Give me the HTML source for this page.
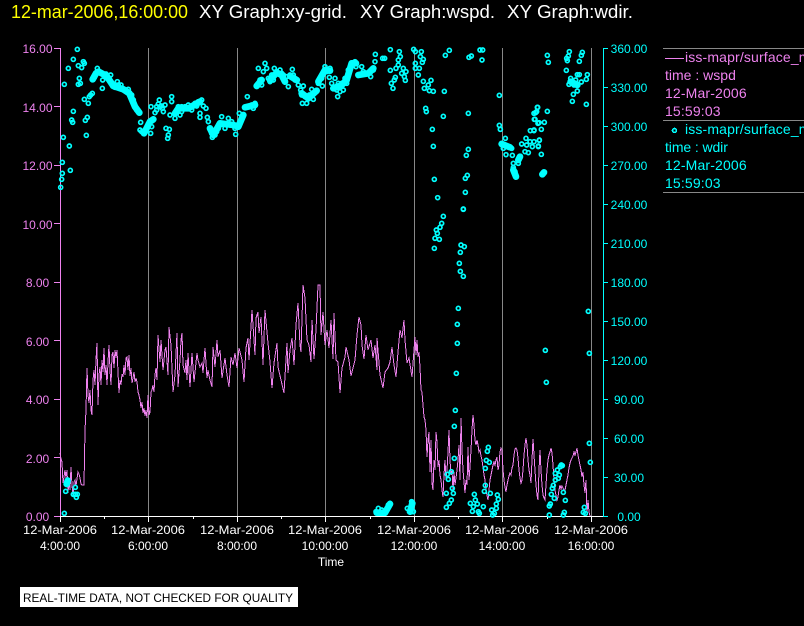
<!DOCTYPE html>
<html><head><meta charset="utf-8"><style>
html,body{margin:0;padding:0;background:#000;width:804px;height:626px;overflow:hidden}
svg{display:block}
text{font-family:"Liberation Sans",sans-serif}
.d{fill:none;stroke:none;marker-start:url(#m);marker-mid:url(#m);marker-end:url(#m)}
.b{fill:none;stroke:#0ff;stroke-width:20;stroke-linejoin:round;stroke-linecap:round}
.l{font-size:12px;fill:#ee82ee;text-anchor:middle}
.r{font-size:12px;fill:#0ff;text-anchor:middle}
.x{font-size:12px;fill:#fff;text-anchor:middle}
.g{font-size:14px;letter-spacing:.15px}
.c{shape-rendering:crispEdges}
</style></head><body>
<svg width="804" height="626" viewBox="0 0 804 626" xmlns="http://www.w3.org/2000/svg">
<defs><marker id="m" markerUnits="userSpaceOnUse" markerWidth="30" markerHeight="30" refX="15" refY="15" overflow="visible"><circle cx="15" cy="15" r="6" fill="none" stroke="#0ff" stroke-width="5"/></marker></defs>
<rect width="804" height="626" fill="#000"/>
<text x="11" y="18" font-size="18" fill="#ff0" textLength="177" lengthAdjust="spacingAndGlyphs">12-mar-2006,16:00:00</text>
<text x="199" y="18" font-size="18" fill="#fff" textLength="148" lengthAdjust="spacingAndGlyphs">XY Graph:xy-grid.</text>
<text x="360" y="18" font-size="18" fill="#fff" textLength="135" lengthAdjust="spacingAndGlyphs">XY Graph:wspd.</text>
<text x="507" y="18" font-size="18" fill="#fff" textLength="126" lengthAdjust="spacingAndGlyphs">XY Graph:wdir.</text>

<path class="c" d="M148.500 48V516M237.500 48V516M325.500 48V516M414.500 48V516M502.500 48V516M591.500 48V516" stroke="#888" stroke-width="1" fill="none"/>

<polyline fill="none" stroke="#ee82ee" stroke-width="1" class="c" points="60,453 61,459 62,462 63,483 64,477 65,470 66,478 67,470 68,493 69,480 70,490 71,467 72,485 73,497 74,482 75,480 76,486 77,479 78,472 79,474 80,478 81,484 82,485 84,485 85,430 86,410 87,368 88,395 89,403 90,390 91,410 92,415 93,380 94,370 95,385 96,360 97,343 98,405 99,375 100,367 101,385 102,360 103,372 104,348 105,375 106,365 107,385 108,362 109,345 110,370 111,385 112,355 113,352 114,368 115,350 116,358 117,350 118,372 119,393 120,380 121,385 122,374 123,377 124,365 125,375 126,358 127,357 128,370 129,355 130,376 131,368 132,383 133,378 134,372 135,382 136,378 137,382 138,392 139,395 140,400 141,408 142,402 143,413 144,408 145,416 146,410 147,418 148,395 149,415 150,412 151,392 152,390 153,385 154,392 155,375 156,368 157,380 158,335 160,362 161,340 163,370 165,350 166,347 168,375 169,327 171,345 173,392 175,375 177,333 178,387 180,360 181,340 182,333 183,365 185,373 186,360 187,380 188,353 190,387 192,353 194,382 197,353 198,360 200,367 202,363 203,373 205,348 207,378 208,370 210,380 212,387 213,347 215,367 217,340 218,357 220,350 222,378 225,358 227,375 229,387 231,357 233,365 235,353 237,368 239,348 242,360 244,382 246,348 248,338 249,360 251,327 252,310 253,325 255,355 256,318 258,312 259,333 261,317 263,365 265,310 268,343 270,362 272,388 274,363 277,343 278,367 281,380 284,393 287,343 288,373 290,350 292,338 294,365 296,325 298,303 300,345 301,352 303,285 305,298 307,340 309,345 311,362 312,320 314,359 316,330 318,285 320,285 321,335 323,312 325,345 327,330 329,348 331,320 333,359 334,313 336,360 338,362 340,393 342,368 345,357 346,347 349,360 351,376 353,368 355,360 357,335 359,317 361,325 362,345 364,359 366,335 368,350 371,340 373,358 375,345 377,370 377,338 380,375 383,388 385,372 388,368 390,362 392,347 394,365 396,377 398,352 400,330 402,338 404,320 405,340 407,363 409,358 412,377 414,350 415,337 416,355 417,340 418,357 419,352 420,367 421,390 422,392 423,405 424,417 425,420 426,430 427,457 428,440 429,432 430,472 431,440 432,483 433,490 434,460 435,470 436,432 437,442 438,467 439,460 440,475 441,480 442,490 443,497 444,475 445,460 446,480 447,470 448,452 449,430 450,460 451,475 452,470 453,490 454,472 455,485 456,478 457,470 458,460 459,445 460,480 461,418 462,450 463,470 464,482 465,493 466,480 467,485 468,447 469,480 470,467 471,450 472,430 473,415 474,425 475,440 476,445 477,440 478,445 479,452 480,450 481,456 482,460 483,467 484,475 485,480 486,490 487,495 488,500 489,490 490,480 491,475 492,470 493,465 494,462 495,465 496,460 497,457 498,470 499,465 500,452 501,448 502,450 503,470 504,480 505,487 506,492 507,485 508,480 509,476 510,473 511,475 512,468 513,465 514,455 515,449 516,448 517,450 518,458 519,470 520,478 521,483 522,480 523,470 524,455 525,445 526,438 527,445 528,460 529,470 530,475 531,483 532,460 533,439 534,455 535,470 536,485 537,495 538,500 539,470 540,450 541,470 542,485 543,495 544,498 545,500 546,485 547,470 548,460 549,455 550,452 551,448 552,453 553,465 554,480 555,490 556,495 557,500 558,497 559,490 560,485 561,489 562,486 563,488 564,490 565,490 566,485 567,480 568,475 569,468 570,463 571,460 572,458 573,456 574,452 575,455 576,452 577,448 578,455 579,460 580,465 581,470 582,477 583,472 584,485 585,493 586,480 587,513 588,500 589,512 590,516"/>

<!-- left axis -->
<path class="c" d="M60.500 48V516M54 48.500H60M54 106.500H60M54 165.500H60M54 223.500H60M54 282.500H60M54 340.500H60M54 399.500H60M54 457.500H60M54 516.500H60" stroke="#ee82ee" fill="none"/>
<!-- right axis -->
<path class="c" d="M603.500 48V516M603 48.500H608M603 87.500H608M603 126.500H608M603 165.500H608M603 204.500H608M603 243.500H608M603 282.500H608M603 321.500H608M603 360.500H608M603 399.500H608M603 438.500H608M603 477.500H608M603 516.500H608" stroke="#0ff" fill="none"/>
<!-- x axis -->
<path class="c" d="M60 516.500H603M60.500 516V522M148.500 516V522M237.500 516V522M325.500 516V522M414.500 516V522M502.500 516V522M591.500 516V522M104.500 516V519M193.500 516V519M281.500 516V519M370.500 516V519M458.500 516V519M547.500 516V519" stroke="#fff" fill="none"/>

<text class="l" x="37.500" y="53">16.00</text><text class="l" x="37.500" y="112">14.00</text><text class="l" x="37.500" y="170">12.00</text><text class="l" x="37.500" y="229">10.00</text><text class="l" x="37.500" y="287">8.00</text><text class="l" x="37.500" y="346">6.00</text><text class="l" x="37.500" y="404">4.00</text><text class="l" x="37.500" y="463">2.00</text><text class="l" x="37.500" y="521">0.00</text>

<text class="r" x="629" y="53">360.00</text><text class="r" x="629" y="92">330.00</text><text class="r" x="629" y="131">300.00</text><text class="r" x="629" y="170">270.00</text><text class="r" x="629" y="209">240.00</text><text class="r" x="629" y="248">210.00</text><text class="r" x="629" y="287">180.00</text><text class="r" x="629" y="326">150.00</text><text class="r" x="629" y="365">120.00</text><text class="r" x="629" y="404">90.00</text><text class="r" x="629" y="443">60.00</text><text class="r" x="629" y="482">30.00</text><text class="r" x="629" y="521">0.00</text>

<text class="x" x="60" y="534" textLength="74" lengthAdjust="spacingAndGlyphs">12-Mar-2006</text><text class="x" x="60" y="550">4:00:00</text>
<text class="x" x="148" y="534" textLength="74" lengthAdjust="spacingAndGlyphs">12-Mar-2006</text><text class="x" x="148" y="550">6:00:00</text>
<text class="x" x="237" y="534" textLength="74" lengthAdjust="spacingAndGlyphs">12-Mar-2006</text><text class="x" x="237" y="550">8:00:00</text>
<text class="x" x="325" y="534" textLength="74" lengthAdjust="spacingAndGlyphs">12-Mar-2006</text><text class="x" x="325" y="550">10:00:00</text>
<text class="x" x="414" y="534" textLength="74" lengthAdjust="spacingAndGlyphs">12-Mar-2006</text><text class="x" x="414" y="550">12:00:00</text>
<text class="x" x="502" y="534" textLength="74" lengthAdjust="spacingAndGlyphs">12-Mar-2006</text><text class="x" x="502" y="550">14:00:00</text>
<text class="x" x="591" y="534" textLength="74" lengthAdjust="spacingAndGlyphs">12-Mar-2006</text><text class="x" x="591" y="550">16:00:00</text>
<text class="x" x="331" y="566">Time</text>

<rect x="20" y="587" width="278" height="20" fill="#fff"/>
<text x="23" y="602" font-size="12" fill="#000" textLength="270" lengthAdjust="spacingAndGlyphs">REAL-TIME DATA, NOT CHECKED FOR QUALITY</text>

<!-- legend -->
<path class="c" d="M663 48.500H804M663 120.500H804M663 192.500H804" stroke="#888" fill="none"/>
<path class="c" d="M665 58.500H684" stroke="#ee82ee" fill="none"/>
<g class="g" fill="#ee82ee"><text x="685" y="62">iss-mapr/surface_met</text><text x="665" y="80" textLength="71">time : wspd</text><text x="665" y="98">12-Mar-2006</text><text x="665" y="116">15:59:03</text></g>
<g class="g" fill="#0ff"><text x="685" y="134">iss-mapr/surface_met</text><text x="665" y="152" textLength="63">time : wdir</text><text x="665" y="170">12-Mar-2006</text><text x="665" y="188">15:59:03</text></g>
<circle cx="674.500" cy="130.500" r="2" fill="none" stroke="#0ff" stroke-width="1.600" class="c"/>

<!-- zoom1 coords -->
<g transform="scale(.33333)">
<polyline class="b" points="278,238 288,220 296,215 320,228 340,258 370,268 388,280 405,320 418,338"/>
<polyline class="b" points="432,400 450,365 460,358"/>
<polyline class="b" points="525,340 535,325 565,325 600,305"/>
<polyline class="b" points="630,385 640,405 660,370 700,375 715,380 730,345"/>
<polyline class="b" points="735,322 765,315"/>
<polyline class="b" points="770,258 785,240"/>
<polyline class="d" points="182,562 185,538 187,520 187,487 190,412 211,511 208,438 205,205 193,253 220,178 232,148 238,235 235,253 241,250 215,360 218,367 220,334 256,361 262,352 259,406 253,298 265,310 268,290 272,285 277,280 235,197 245,203 250,185 253,190 278,238 283,232 288,220 292,205 296,215 302,218 308,240 307,265 312,225 318,222 325,232 332,225 330,245 338,258 345,262 352,245 355,255 363,255 370,268 378,270 385,268 388,280 395,285 400,300 405,318 410,330 418,338 422,367 425,395 420,390 432,400 440,385 445,372 450,365 455,380 452,400 460,358 465,338 470,320 478,300 485,318 490,335 495,315 453,320 498,385 508,388 505,405 503,415 515,290 515,305 510,345 525,340 525,355 535,320 540,345 545,335 555,320 565,315 575,330 585,310 595,305 605,300 610,318 600,340 600,352 618,325 622,352 625,365 630,385 635,400 645,405 637,412 655,385 665,350 660,370 675,385 685,355 695,365 705,385 707,403 715,380 718,340 730,345 735,322 742,290 745,320 755,315 765,310 760,325 770,258 775,205 780,240 785,255 795,190 790,215 800,205 805,235 470,330 480,320 475,312 487,325 545,320 570,322 590,318 650,395 680,375 690,375"/>
</g>
<!-- zoom2 coords -->
<g transform="translate(270 0) scale(.33333)">
<polyline class="b" points="0,240 20,218 35,225 45,245"/>
<polyline class="b" points="60,228 80,240"/>
<polyline class="b" points="95,280 115,295 140,272"/>
<polyline class="b" points="145,245 165,210 180,212"/>
<polyline class="b" points="190,265 215,255 230,240 245,190 258,190"/>
<polyline class="b" points="265,225 295,220 310,205"/>
<polyline class="b" points="695,432 720,442"/>
<polyline class="b" points="730,510 738,530"/>
<polyline class="b" points="745,480 750,470"/>
<polyline class="d" points="13,205 5,225 10,240 0,245 20,215 30,210 35,220 40,225 50,230 45,245 55,260 60,225 67,208 70,225 75,240 82,240 85,255 92,270 100,258 95,285 105,290 97,310 110,310 125,268 118,285 130,280 140,272 130,298 115,295 135,275 145,250 155,235 165,200 170,215 180,205 178,232 195,235 185,250 157,258 195,265 205,250 215,250 200,270 210,275 203,290 220,270 230,250 225,235 235,210 245,190 255,185 258,200 275,200 265,225 280,215 295,220 302,230 310,210 315,185 316,163 338,175 344,175 361,149 388,155 391,170 385,180 385,195 378,205 361,211 376,232 373,240 364,250 369,265 400,205 408,215 395,220 403,230 406,241 431,148 436,155 454,155 451,170 460,178 457,187 436,190 448,205 436,205 445,225 460,244 483,241 475,255 463,265 478,272 490,274 523,274 526,166 538,151 597,172 604,168 630,150 638,150 636,180 688,286 467,325 469,335 520,349 595,340 487,388 490,439 595,448 589,466 592,526 586,535 493,538 586,577 503,593 580,627 688,376 691,388 706,415 695,430 705,435 715,440 700,445 725,445 708,464 727,466 750,470 745,490 730,490 730,503 735,515 738,530 755,432 768,415 770,435 780,425 765,455 775,458 787,440 781,392 792,392 793,358 797,338 803,322 804,370 808,420 805,440"/>
</g>
<!-- zoom3 coords -->
<g transform="translate(534 0) scale(.33333)">
<polyline class="b" points="25,523 30,517"/>
<polyline class="b" points="110,245 130,255"/>
<polyline class="d" points="40,166 43,187 106,155 103,168 98,175 100,182 145,157 142,166 136,184 97,211 160,224 157,238 136,224 130,224 142,246 130,255 125,240 110,235 115,250 105,253 120,255 130,273 118,283 115,304 157,313 40,334 10,322 8,335 0,340 3,358 15,368 31,367 22,388 0,390 16,421 0,425 13,438 22,463 30,517 25,523"/>
</g>
<!-- zoom6 coords -->
<g transform="translate(410 200) scale(.33333)">
<polyline class="d" points="73,145 75,115 88,118 82,100 79,90 90,82 95,70 100,49 160,28 153,135 163,140 151,157 148,190 151,214 160,229 145,325 142,373 142,430 139,520 136,631 133,679 133,775 127,865 130,880 109,880 115,838 112,823 124,815 109,922 118,910 124,900 193,883 181,910 196,900 187,934 190,920 202,912 205,935 208,940 220,920 223,874 226,856 226,805 229,781 238,787 235,742 232,754 241,880 245,930 248,945 253,940 259,925 259,912 265,898 262,885 406,451 409,547 418,945 418,918 421,912 424,883 427,865 430,856 433,895 436,840 436,820 442,810 445,835 448,825 451,800 454,795 457,797 460,877 466,901 463,937 460,945 535,334 538,460 538,730 541,787 523,922 520,937 526,940 5,905 5,920 3,935 10,935"/>
</g>
<!-- zoom5 coords -->
<g transform="translate(270 270) scale(.33333)">
<polyline class="b" points="320,728 345,728 360,702"/>
<polyline class="b" points="420,725 427,700"/>
<polyline class="d" points="318,725 325,715 335,720 345,725 355,705 360,700 412,715 425,695 420,725 430,725"/>
</g>
<!-- zoom4 coords -->
<g transform="translate(0 270) scale(.33333)">
<polyline class="b" points="200,642 203,632"/>
<polyline class="d" points="193,730 197,664 200,642 203,630 226,652 220,673 226,673 229,682 232,673"/>
</g>
</svg>
</body></html>
